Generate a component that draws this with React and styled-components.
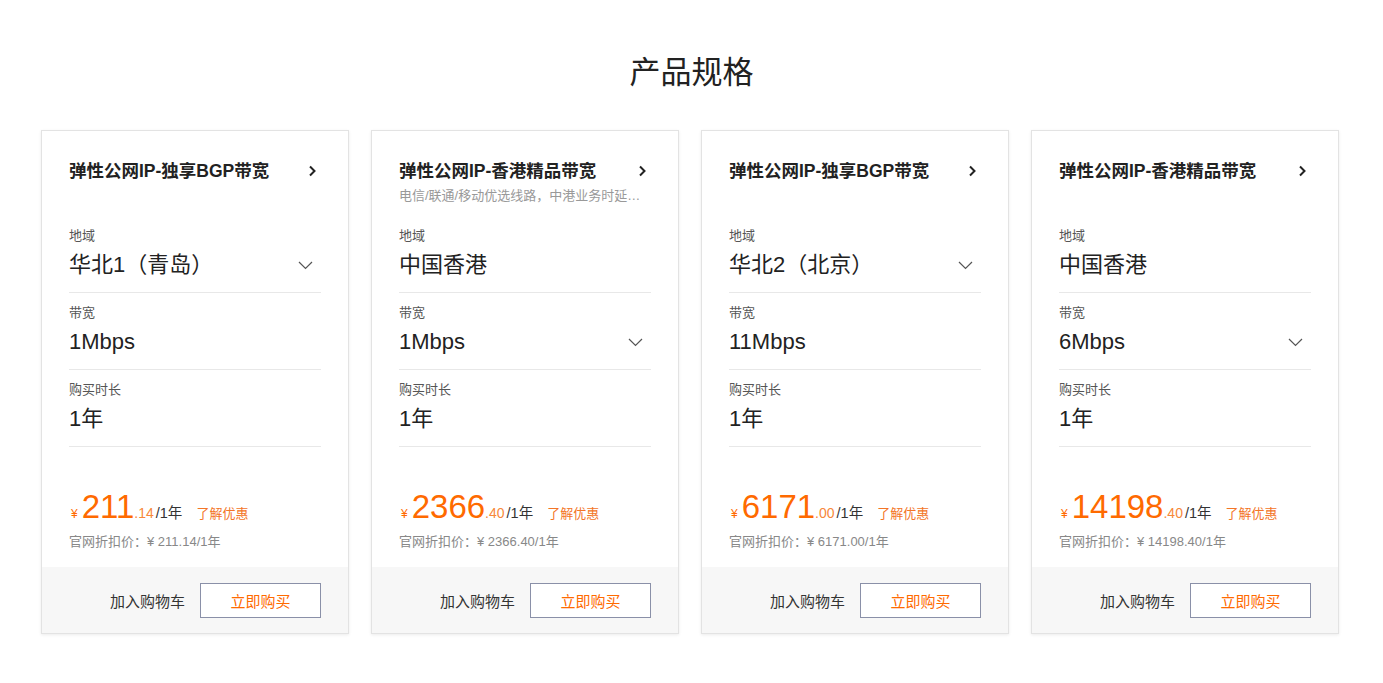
import React from "react"
import styled, { createGlobalStyle } from "styled-components"

const GlobalStyle = createGlobalStyle`
  body {
    margin: 0;
    background: #fff;
    font-family: "Helvetica Neue", "Liberation Sans", Arial, "Noto Sans CJK SC", sans-serif;
    color: #333;
  }
`

const products = [
  {
    id: 1,
    title: "弹性公网IP-独享BGP带宽",
    desc: "",
    region: "华北1（青岛）",
    regionSelect: true,
    bandwidth: "1Mbps",
    bandwidthSelect: false,
    duration: "1年",
    int: "211",
    dec: ".14",
    list: "¥ 211.14/1年",
  },
  {
    id: 2,
    title: "弹性公网IP-香港精品带宽",
    desc: "电信/联通/移动优选线路，中港业务时延低，适合香港及跨境业务",
    region: "中国香港",
    regionSelect: false,
    bandwidth: "1Mbps",
    bandwidthSelect: true,
    duration: "1年",
    int: "2366",
    dec: ".40",
    list: "¥ 2366.40/1年",
  },
  {
    id: 3,
    title: "弹性公网IP-独享BGP带宽",
    desc: "",
    region: "华北2（北京）",
    regionSelect: true,
    bandwidth: "11Mbps",
    bandwidthSelect: false,
    duration: "1年",
    int: "6171",
    dec: ".00",
    list: "¥ 6171.00/1年",
  },
  {
    id: 4,
    title: "弹性公网IP-香港精品带宽",
    desc: "",
    region: "中国香港",
    regionSelect: false,
    bandwidth: "6Mbps",
    bandwidthSelect: true,
    duration: "1年",
    int: "14198",
    dec: ".40",
    list: "¥ 14198.40/1年",
  },
]

const ChevronRight = () => (
  <svg width="8" height="12" viewBox="0 0 8 12" fill="none">
    <path d="M2 1.5l4.5 4.5L2 10.5" stroke="#222" strokeWidth="2" />
  </svg>
)

const ChevronDown = () => (
  <svg width="15" height="9" viewBox="0 0 15 9" fill="none">
    <path d="M1 1l6.5 6.5L14 1" stroke="#555" strokeWidth="1.2" />
  </svg>
)

export default function App() {
  return (
    <Page>
      <GlobalStyle />
      <Heading>产品规格</Heading>
      <Grid>
        {products.map(p => (
          <Card key={p.id}>
            <Body>
              <TitleRow>
                <Title>{p.title}</Title>
                <ChevronRight />
              </TitleRow>
              <Desc>{p.desc}</Desc>
              <Fields>
                <Field>
                  <Label>地域</Label>
                  <Value>
                    <span>{p.region}</span>
                    {p.regionSelect && <ChevronDown />}
                  </Value>
                </Field>
                <Field>
                  <Label>带宽</Label>
                  <Value>
                    <span>{p.bandwidth}</span>
                    {p.bandwidthSelect && <ChevronDown />}
                  </Value>
                </Field>
                <Field>
                  <Label>购买时长</Label>
                  <Value>
                    <span>{p.duration}</span>
                  </Value>
                </Field>
              </Fields>
              <PriceRow>
                <Yen>¥</Yen>
                <Big>{p.int}</Big>
                <Decimal>{p.dec}</Decimal>
                <Unit>/1年</Unit>
                <Promo>了解优惠</Promo>
              </PriceRow>
              <ListPrice>官网折扣价：{p.list}</ListPrice>
            </Body>
            <Footer>
              <CartButton>加入购物车</CartButton>
              <BuyButton>立即购买</BuyButton>
            </Footer>
          </Card>
        ))}
      </Grid>
    </Page>
  )
}

const Page = styled.div`
  padding-top: 53px;
  padding-bottom: 40px;
`

const Heading = styled.h2`
  margin: 0 0 37px;
  text-align: center;
  font-size: 31px;
  line-height: 40px;
  font-weight: 400;
  color: #222;
`

const Grid = styled.div`
  display: grid;
  grid-template-columns: repeat(4, 308px);
  gap: 22px;
  justify-content: center;
  padding-right: 3px;
`

const Card = styled.div`
  background: #fff;
  border: 1px solid #e3e3e3;
  box-shadow: 0 1px 3px rgba(0, 0, 0, 0.08);
  display: flex;
  flex-direction: column;
`

const Body = styled.div`
  padding: 28px 27px 16px;
`

const TitleRow = styled.div`
  display: flex;
  align-items: center;
  justify-content: space-between;
  padding-right: 5px;
`

const Title = styled.div`
  font-size: 17.5px;
  line-height: 24px;
  font-weight: 700;
  color: #222;
`

const Desc = styled.div`
  margin-top: 4px;
  height: 18px;
  font-size: 13px;
  line-height: 18px;
  color: #999;
  white-space: nowrap;
  overflow: hidden;
  text-overflow: ellipsis;
`

const Fields = styled.div`
  margin-top: 11px;
`

const Field = styled.div`
  padding: 11px 0 12px;
  border-bottom: 1px solid #e8e8e8;
`

const Label = styled.div`
  font-size: 13px;
  line-height: 18px;
  color: #555;
`

const Value = styled.div`
  margin-top: 5px;
  display: flex;
  align-items: center;
  justify-content: space-between;
  padding-right: 8px;
  font-size: 22px;
  line-height: 30px;
  color: #222;
`

const PriceRow = styled.div`
  margin-top: 42px;
  display: flex;
  align-items: baseline;
  line-height: 36px;
  color: #ff6a00;
`

const Yen = styled.span`
  font-size: 12px;
  margin: 0 4px 0 2px;
`

const Big = styled.span`
  font-size: 33px;
`

const Decimal = styled.span`
  font-size: 14px;
  margin-right: 2px;
  color: #f7883a;
`

const Unit = styled.span`
  font-size: 14.5px;
  color: #333;
`

const Promo = styled.span`
  margin-left: 14px;
  font-size: 13px;
  color: #f37527;
`

const ListPrice = styled.div`
  margin-top: 1px;
  font-size: 13px;
  line-height: 18px;
  color: #888;
`

const Footer = styled.div`
  background: #f7f7f7;
  padding: 16px 27px 15px;
  display: flex;
  align-items: center;
  justify-content: flex-end;
  gap: 15px;
`

const CartButton = styled.button`
  border: none;
  background: none;
  padding: 0;
  font-family: inherit;
  font-size: 15px;
  color: #333;
  cursor: pointer;
`

const BuyButton = styled.button`
  width: 121px;
  height: 35px;
  border: 1px solid #8a90a8;
  background: #fff;
  font-family: inherit;
  font-size: 15px;
  color: #ff6a00;
  cursor: pointer;
`
